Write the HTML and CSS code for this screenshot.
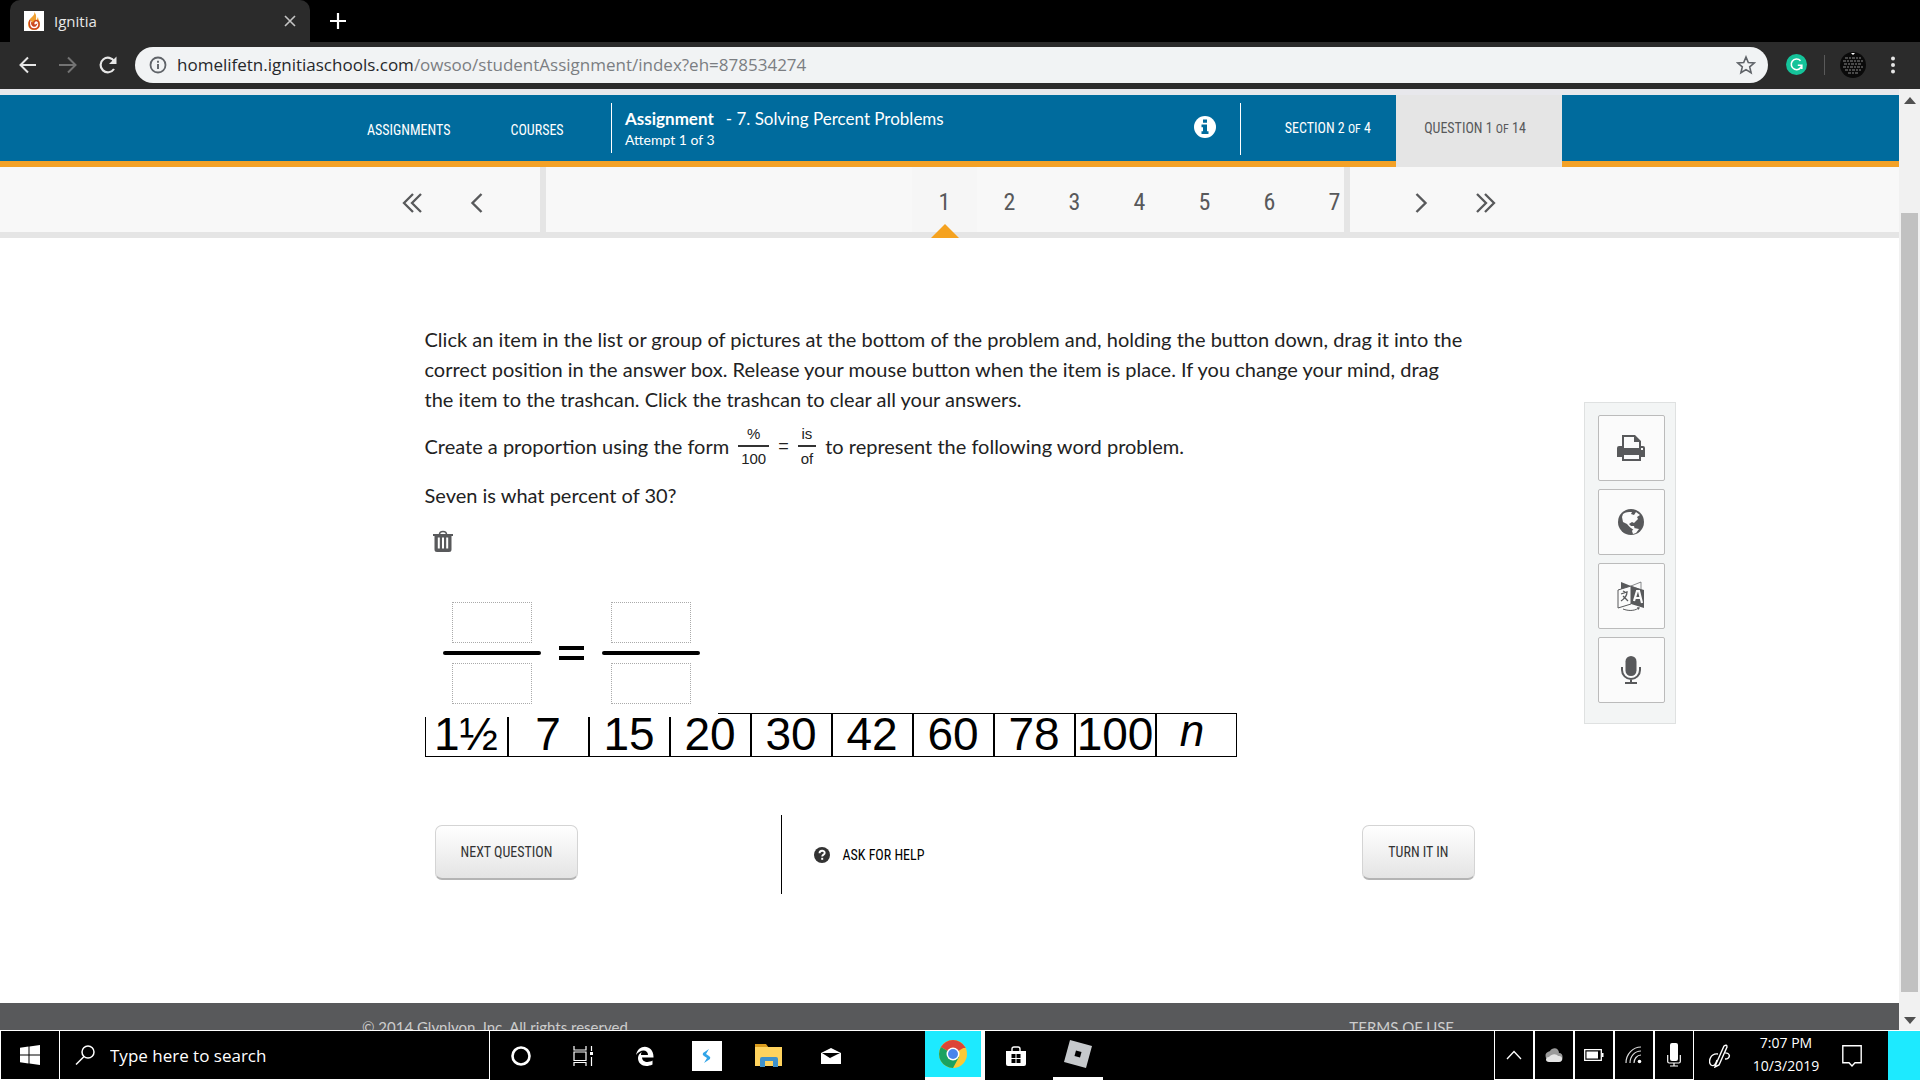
FILE: index.html
```html
<!DOCTYPE html>
<html lang="en">
<head>
  <meta charset="UTF-8">
  <meta name="viewport" content="width=device-width, initial-scale=1.0">
  <title>Ignitia</title>
  <link rel="stylesheet" href="styles.css">
</head>
<body>
  <!-- Browser -->
  <div class="tab-strip">
    <div class="tab">
      <svg class="favicon" viewBox="0 0 20 20"><rect width="20" height="20" fill="#fff"/><path d="M10 1c2 4-6 6-6 12 0 4 3 6 6 6s6-2 6-6c0-3-2-4-2-7-1 2-1 3-2 4 0-4 1-6-2-9z" fill="#f0a030"/><path d="M6 9c-2 5 0 9 4 9 3 0 5-2 5-5s-3-5-5-2c-1 2 0 4 2 3-1 2-5 1-4-3" fill="#fff" stroke="#c8441f" stroke-width="1.500"/></svg>
      <span class="tab-title">Ignitia</span>
      <button type="button" class="tab-close" aria-label="Close tab"><svg width="12" height="12" viewBox="0 0 12 12"><path d="M1 1l10 10M11 1L1 11" stroke="#c4c4c4" stroke-width="1.6"/></svg></button>
    </div>
    <button type="button" class="new-tab" aria-label="New tab"><svg width="16" height="16" viewBox="0 0 16 16"><path d="M8 0v16M0 8h16" stroke="#fff" stroke-width="2.2"/></svg></button>
  </div>
  <div class="toolbar">
    <div class="toolbar-nav">
      <button type="button" aria-label="Back"><svg width="20" height="20" viewBox="0 0 20 20"><path d="M18 10H3M10 2.500L2.500 10l7.500 7.500" fill="none" stroke="#e6e6e6" stroke-width="2"/></svg></button>
      <button type="button" aria-label="Forward"><svg width="20" height="20" viewBox="0 0 20 20"><path d="M1 10h16M10 2.500l7.500 7.500-7.500 7.500" fill="none" stroke="#737373" stroke-width="2"/></svg></button>
      <button type="button" aria-label="Reload"><svg width="20" height="20" viewBox="0 0 20 20"><path d="M16 14a7.300 7.300 0 1 1 .3-7.500" fill="none" stroke="#e6e6e6" stroke-width="2.200"/><path d="M18.500 1.500v7.500H11z" fill="#e6e6e6"/></svg></button>
    </div>
    <div class="address">
      <svg width="18" height="18" viewBox="0 0 18 18"><circle cx="9" cy="9" r="7.500" fill="none" stroke="#5f6368" stroke-width="1.800"/><path d="M9 8v5M9 4.800v1.900" stroke="#5f6368" stroke-width="1.900"/></svg>
      <div class="url">homelifetn.ignitiaschools.com<span>/owsoo/studentAssignment/index?eh=878534274</span></div>
      <svg width="20" height="20" viewBox="0 0 20 20"><path d="M10 2l2.300 5.500 5.900.5-4.500 3.900 1.400 5.800-5.100-3.100-5.100 3.100 1.400-5.800L1.800 8l5.900-.5z" fill="none" stroke="#5f6368" stroke-width="1.600"/></svg>
    </div>
    <svg class="grammarly" width="21" height="21" viewBox="0 0 21 21"><circle cx="10.500" cy="10.500" r="10.500" fill="#15c39a"/><path d="M14.500 6.800a5.300 5.300 0 1 0 1.300 4.400h-4M15.800 11v4" fill="none" stroke="#fff" stroke-width="1.600"/></svg>
    <span class="toolbar-line"></span>
    <svg width="26" height="26" viewBox="0 0 26 26"><circle cx="13" cy="13" r="13" fill="#0a0a0a"/><path d="M5 6h16M3 9h20M4 12h18M3 15h20M5 18h16M8 21h10" stroke="#888" stroke-width="1" stroke-dasharray="3 1 2 1"/><path d="M11 1h4l-2 2z" fill="#fff"/></svg>
    <svg class="dots" width="6" height="18" viewBox="0 0 6 18"><circle cx="3" cy="2.500" r="2" fill="#e6e6e6"/><circle cx="3" cy="9" r="2" fill="#e6e6e6"/><circle cx="3" cy="15.500" r="2" fill="#e6e6e6"/></svg>
  </div>

  <div class="window">
    <div class="page">
      <header class="header">
        <div class="container header-row">
          <nav class="main-nav">
            <a href="#">ASSIGNMENTS</a>
            <a href="#">COURSES</a>
          </nav>
          <div class="assignment">
            <div class="assignment-title"><strong>Assignment</strong>- 7. Solving Percent Problems</div>
            <div class="attempt">Attempt 1 of 3</div>
          </div>
          <button type="button" class="info" aria-label="Assignment info"><svg width="22" height="22" viewBox="0 0 22 22"><circle cx="11" cy="11" r="11" fill="#fff"/><path d="M9 3.500h4v3.200H9zM7.500 8.500H13v6.800h1.500V18h-7v-2.700H9v-4.100H7.500z" fill="#006b9d"/></svg></button>
          <div class="section">SECTION 2 <small>OF</small> 4</div>
          <div class="question-count">QUESTION 1 <small>OF</small> 14</div>
        </div>
      </header>

      <nav class="pager">
        <div class="container pager-row">
          <div class="pager-prev">
            <button type="button" aria-label="First question"><svg width="20" height="20" viewBox="0 0 20 20"><path d="M11 1l-9 9 9 9M19 1l-9 9 9 9" fill="none" stroke="#58595b" stroke-width="2.300"/></svg></button>
            <button type="button" aria-label="Previous question"><svg width="20" height="20" viewBox="0 0 20 20"><path d="M14.500 1L5.500 10l9 9" fill="none" stroke="#58595b" stroke-width="2.400"/></svg></button>
          </div>
          <ol class="pager-list">
            <li class="active"><a href="#">1</a></li>
            <li><a href="#">2</a></li>
            <li><a href="#">3</a></li>
            <li><a href="#">4</a></li>
            <li><a href="#">5</a></li>
            <li><a href="#">6</a></li>
            <li><a href="#">7</a></li>
          </ol>
          <div class="pager-next">
            <button type="button" aria-label="Next question"><svg width="20" height="20" viewBox="0 0 20 20"><path d="M5.500 1l9 9-9 9" fill="none" stroke="#58595b" stroke-width="2.400"/></svg></button>
            <button type="button" aria-label="Last question"><svg width="20" height="20" viewBox="0 0 20 20"><path d="M1 1l9 9-9 9M9 1l9 9-9 9" fill="none" stroke="#58595b" stroke-width="2.300"/></svg></button>
          </div>
        </div>
      </nav>

      <main class="main">
        <div class="content">
          <p class="instructions">Click an item in the list or group of pictures at the bottom of the problem and, holding the button down, drag it into the correct position in the answer box. Release your mouse button when the item is place. If you change your mind, drag the item to the trashcan. Click the trashcan to clear all your answers.</p>
          <p class="proportion">Create a proportion using the form
            <span class="fraction"><span>%</span><span>100</span></span>
            <span class="equals">=</span>
            <span class="fraction"><span>is</span><span>of</span></span>
            to represent the following word problem.</p>
          <p>Seven is what percent of 30?</p>
          <button type="button" class="trash" aria-label="Clear all answers"><svg width="20" height="22" viewBox="0 0 20 22"><path d="M6.500 4.500c0-4 7-4 7 0" fill="none" stroke="#58595b" stroke-width="1.600"/><path fill-rule="evenodd" d="M0 4h20v2h-1.500v13.500q0 2.500-2.500 2.500H4q-2.500 0-2.500-2.500V6H0zM4.800 7.500v11h2v-11zM9 7.500v11h2v-11zM13.200 7.500v11h2v-11z" fill="#58595b"/></svg></button>

          <div class="answer">
            <div class="answer-side">
              <div class="drop"></div>
              <div class="bar"></div>
              <div class="drop"></div>
            </div>
            <div class="answer-equals"></div>
            <div class="answer-side">
              <div class="drop"></div>
              <div class="bar"></div>
              <div class="drop"></div>
            </div>
          </div>
          <ul class="tiles">
            <li>1½</li>
            <li>7</li>
            <li>15</li>
            <li>20</li>
            <li>30</li>
            <li>42</li>
            <li>60</li>
            <li>78</li>
            <li>100</li>
            <li class="variable">n</li>
          </ul>

          <div class="actions">
            <button type="button" class="btn">NEXT QUESTION</button>
            <a href="#" class="help"><svg width="16" height="16" viewBox="0 0 16 16"><circle cx="8" cy="8" r="8" fill="#333"/><path d="M5.500 6.200c0-3.300 5.200-3.200 5.200-.3 0 1.800-2.500 1.600-2.500 3.600" fill="none" stroke="#fff" stroke-width="1.900"/><path d="M7.200 10.800h2v2h-2z" fill="#fff"/></svg>ASK FOR HELP</a>
            <button type="button" class="btn">TURN IT IN</button>
          </div>
        </div>

        <aside class="tools">
          <button type="button" aria-label="Print"><svg width="28" height="26" viewBox="0 0 28 26"><path fill-rule="evenodd" d="M5 0h13l6 6v5h2q2 0 2 2v9h-4v4H5v-4H0v-9q0-2 2-2h3zM7 2v11h15V7h-5V2zM7 20v4h15v-4zM24 13v2h2v-2z" fill="#58595b"/></svg></button>
          <button type="button" aria-label="Web"><svg width="26" height="26" viewBox="0 0 26 26"><circle cx="13" cy="13" r="13" fill="#58595b"/><path d="M5 5c3-2 5-2 9-2l-1 2 3 1 2-3 4 3-3 2 1 2-4 4-2-1-3 2 2 2 3 0 1 4c-4-1-6-4-8-6L5 13 4 8zM16 19l5 1-3 4-3 1-1-3z" fill="#fbfbfb"/></svg></button>
          <button type="button" aria-label="Translate"><svg width="28" height="30" viewBox="0 0 28 30"><path d="M4 1l10 4v2L4 9z" fill="#58595b"/><path d="M14 5l10-4v8z" fill="#fbfbfb" stroke="#58595b" stroke-width=".7"/><path d="M1 9l13-4v18L1 27z" fill="#fbfbfb" stroke="#58595b"/><path d="M14 5l13 4v18l-13-4z" fill="#58595b"/><path d="M4 13l6-2c0 4-3 7-6 9M6 10l2 1M6 15l5 5" fill="none" stroke="#58595b" stroke-width="1.300"/><path d="M17 20l3-10 2 0 3 12M18 17h6" fill="none" stroke="#fbfbfb" stroke-width="2.200"/><path d="M6 28c5 2 11 2 15-.5" fill="none" stroke="#58595b"/><path d="M20 26l3 .5-1.500 2.500z" fill="#58595b"/></svg></button>
          <button type="button" aria-label="Record"><svg width="20" height="28" viewBox="0 0 20 28"><rect x="4.500" width="11" height="20" rx="5.500" fill="#58595b"/><path d="M1 11v3a9 9 0 0 0 18 0v-3M10 23v4M4 27h12" fill="none" stroke="#58595b" stroke-width="2"/></svg></button>
        </aside>
      </main>

      <footer class="footer">
        <div class="container footer-row">
          <span>© 2014 Glynlyon, Inc. All rights reserved.</span>
          <a href="#">TERMS OF USE</a>
        </div>
      </footer>
    </div>
    <div class="scrollbar">
      <svg width="12" height="7" viewBox="0 0 12 7"><path d="M6 0l6 7H0z" fill="#505050"/></svg>
      <div class="thumb"></div>
      <svg width="12" height="7" viewBox="0 0 12 7"><path d="M6 7L0 0h12z" fill="#505050"/></svg>
    </div>
  </div>

  <!-- Taskbar -->
  <div class="taskbar">
    <button type="button" class="start" aria-label="Start"><svg width="20" height="20" viewBox="0 0 20 20"><path d="M0 2.800L8.500 1.600v7.900H0zM9.500 1.400L20 0v9.500H9.500zM0 10.500h8.500v7.900L0 17.200zM9.500 10.500H20V20L9.500 18.600z" fill="#fff"/></svg></button>
    <label class="search">
      <svg width="20" height="20" viewBox="0 0 20 20"><circle cx="13" cy="7" r="6" fill="none" stroke="#fff" stroke-width="1.500"/><path d="M9 11.500L1 19.500" stroke="#fff" stroke-width="1.500"/></svg>
      <input type="text" placeholder="Type here to search" aria-label="Search">
    </label>
    <div class="apps">
      <button type="button" aria-label="Cortana"><svg width="20" height="20" viewBox="0 0 20 20"><circle cx="10" cy="10" r="8.500" fill="none" stroke="#fff" stroke-width="2.600"/></svg></button>
      <button type="button" aria-label="Task view"><svg width="20" height="20" viewBox="0 0 20 20"><path d="M1 0v4h12V0M1 6h12v8.500H1zM1 20v-3.500h12V20M18.500 0v5M18.500 11v9" fill="none" stroke="#fff" stroke-width="1.200"/><path d="M17 6h3v3h-3z" fill="#fff"/></svg></button>
      <button type="button" aria-label="Edge"><svg width="18" height="20" viewBox="0 0 18 20"><path d="M0 9C2-3 18-2 17.500 11.500H6c.3 5 6.500 5.500 10.500 3v4C9 22 2 19 2 12c0-3 2-5 4-6-1 1-1 2-1 3h7C12 3 4 3 0 9z" fill="#fff"/></svg></button>
      <button type="button" aria-label="Swift"><svg width="30" height="30" viewBox="0 0 30 30"><path d="M0 0h30v30H0z" fill="#fff"/><path d="M17 8l-6 4q-1 2 1 3l3 2-3 5 6-4q1-2-1-3l-3-2z" fill="#30a4e8"/></svg></button>
      <button type="button" aria-label="File Explorer"><svg width="28" height="28" viewBox="0 0 28 28"><path d="M0 2h11l3 4H0z" fill="#d99b1d"/><path d="M0 5h27v19H0z" fill="#ffd35e"/><path d="M5 25v-8q0-2 2-2h14q2 0 2 2v8h-5v-6h-8v6z" fill="#3f91cb"/></svg></button>
      <button type="button" aria-label="Mail"><svg width="20" height="16" viewBox="0 0 20 16"><path d="M0 5l10-5 10 5v11H0z" fill="#fff"/><path d="M1 5h18L9 10l3 2z" fill="#000"/></svg></button>
      <span class="gap"></span>
      <button type="button" class="running current" aria-label="Chrome"><svg width="28" height="28" viewBox="0 0 28 28"><circle cx="14" cy="14" r="14" fill="#fcc934"/><path d="M14 14L1.900 7A14 14 0 0 1 26.100 7z" fill="#dc4437"/><path d="M14 14L1.900 7A14 14 0 0 0 14 28l6-11z" fill="#1aa260"/><path d="M14 8h12.600L26.100 7h-12z" fill="#dc4437"/><circle cx="14" cy="14" r="6.500" fill="#fff"/><circle cx="14" cy="14" r="5" fill="#4a85ec"/></svg></button>
      <button type="button" aria-label="Store"><svg width="20" height="20" viewBox="0 0 20 20"><path d="M6 6V3q0-2 2-2h4q2 0 2 2v3" fill="none" stroke="#fff" stroke-width="1.400"/><path d="M0 5h20v13q0 2-2 2H2q-2 0-2-2z" fill="#fff"/><path d="M5.500 8h4v4h-4zM10.500 8h4v4h-4zM5.500 13h4v4h-4zM10.500 13h4v4h-4z" fill="#000"/></svg></button>
      <button type="button" class="running" aria-label="Roblox"><svg width="28" height="28" viewBox="0 0 28 28"><path d="M6 0l22 6-6 22L0 22z" fill="#c6c9cc"/><path d="M12 10.500l5.500 1.500-1.500 5.500-5.500-1.500z" fill="#000"/></svg></button>
    </div>
    <div class="tray">
      <button type="button" aria-label="Show hidden icons"><svg width="16" height="10" viewBox="0 0 16 10"><path d="M1 9l7-7.500L15 9" fill="none" stroke="#fff" stroke-width="1.300"/></svg></button>
      <button type="button" aria-label="OneDrive"><svg width="18" height="14" viewBox="0 0 18 14"><path d="M1 10C-1 4 4 4 5 3c2-4 9-4 9 2 4 0 4 5 3 6z" fill="#9a9a9a"/><path d="M4 14c-4 0-4-5 0-5 3-4 8-3 9-1 5-1 6 6 1 6z" fill="#e4e4e4"/></svg></button>
      <button type="button" aria-label="Battery"><svg width="20" height="12" viewBox="0 0 20 12"><path d="M.7.700h16.600v10.600H.7z" fill="none" stroke="#fff" stroke-width="1.300"/><path d="M2.500 2.500h11.500v7H2.500zM18 4h1.500v4H18z" fill="#fff"/></svg></button>
      <button type="button" aria-label="Network"><svg width="18" height="18" viewBox="0 0 18 18"><path d="M1 17C1 8 8 1 16 1M5 17c0-7 5-12 11-12M9 17c0-4 3-8 7-8" fill="none" stroke="#ddd" stroke-width="1.200"/><circle cx="14.500" cy="15.500" r="1.800" fill="#fff"/></svg></button>
      <button type="button" aria-label="Microphone"><svg width="14" height="24" viewBox="0 0 14 24"><rect x="3" width="8" height="18" rx="2" fill="#fff"/><path d="M.7 12v6.500q0 1.500 1.500 1.500h9.600q1.500 0 1.500-1.500V12M7 20v3M3 23h8" fill="none" stroke="#fff" stroke-width="1.200"/></svg></button>
      <button type="button" class="pen" aria-label="Ink workspace"><svg width="22" height="24" viewBox="0 0 22 24"><path d="M7 20L15 2q3-2 3 1l-8 18-4 2zM9 10c-8-1-10 8-7 11 3 2 5-1 6-5M15 9c7-1 7 6 1 6" fill="none" stroke="#fff" stroke-width="1.400"/></svg></button>
      <div class="clock"><span>7:07 PM</span><span>10/3/2019</span></div>
      <button type="button" class="notify" aria-label="Notifications"><svg width="20" height="22" viewBox="0 0 20 22"><path d="M.8.800h18.400v17H13L10 21l-3-3.200H.8z" fill="none" stroke="#fff" stroke-width="1.400"/></svg></button>
      <span class="peek"></span>
    </div>
  </div>
</body>
</html>
```

FILE: styles.css
```css
* {
  box-sizing: border-box;
}
body {
  display: flex;
  flex-direction: column;
  height: 100vh;
  margin: 0;
  overflow: hidden;
  background: #fff;
  color: #222;
  font-family: Lato, "Open Sans", sans-serif;
  font-size: 20px;
}
button {
  display: flex;
  align-items: center;
  justify-content: center;
  padding: 0;
  border: none;
  background: none;
  cursor: pointer;
}
a {
  color: inherit;
  text-decoration: none;
}
svg {
  display: block;
  flex: none;
}

/* browser */
.tab-strip {
  display: flex;
  align-items: center;
  flex: none;
  height: 42px;
  padding-left: 10px;
  background: #000;
}
.tab {
  display: flex;
  align-items: center;
  width: 300px;
  height: 42px;
  padding: 0 14px;
  border-radius: 10px 10px 0 0;
  background: #2b2b2b;
  color: #e8e8e8;
  font: 15px "Open Sans", sans-serif;
}
.favicon {
  width: 20px;
  height: 20px;
  margin-right: 10px;
}
.tab-title {
  flex: 1;
}
.new-tab {
  margin-left: 20px;
}
.toolbar {
  display: flex;
  align-items: center;
  flex: none;
  height: 47px;
  padding: 0 24px 2px 18px;
  background: #2b2b2b;
}
.toolbar-nav {
  display: flex;
  gap: 20px;
  margin-right: 17px;
}
.address {
  display: flex;
  align-items: center;
  flex: 1;
  height: 36px;
  padding: 0 12px 0 14px;
  border-radius: 18px;
  background: #f1f3f4;
}
.url {
  flex: 1;
  margin-left: 10px;
  color: #26282b;
  font: 17px "Open Sans", sans-serif;
}
.url span {
  color: #7b7e82;
}
.grammarly {
  margin-left: 18px;
}
.toolbar-line {
  width: 1px;
  height: 20px;
  margin: 0 15px 0 17px;
  background: #5a5a5a;
}
.dots {
  margin-left: 24px;
}

/* page */
.window {
  display: flex;
  flex: 1;
  min-height: 0;
}
.page {
  flex: 1;
  overflow: hidden;
  border-top: 6px solid #e8e8ec;
}
.container {
  display: flex;
  max-width: 1225px;
  margin: 0 auto;
}
.header {
  background: linear-gradient(#006b9d 66px, #f3a126 66px);
  color: #fff;
}
.header-row {
  height: 72px;
}
.main-nav {
  display: flex;
  gap: 60px;
  width: 274px;
  padding: 26px 0 0 30px;
}
.main-nav,
.section,
.question-count,
.btn,
.help {
  font-family: "Liberation Sans Narrow", "Roboto Condensed", "Liberation Sans", sans-serif;
  font-size: 14px;
  line-height: 18px;
}
.assignment {
  flex: 1;
  height: 50px;
  margin-top: 8px;
  padding: 5px 0 0 13px;
  border-left: 1px solid #fff;
}
.assignment-title {
  font-size: 17px;
  line-height: 22px;
}
.assignment-title strong {
  margin-right: 12px;
}
.attempt {
  font-size: 14px;
  line-height: 20px;
}
.info {
  height: 64px;
  margin-right: 24px;
}
.section {
  height: 52px;
  margin-top: 8px;
  padding: 16px 25px 0 44px;
  border-left: 1px solid #fff;
}
.section small,
.question-count small {
  font-size: 12px;
}
.question-count {
  width: 166px;
  height: 72px;
  padding: 24px 8px 0 0;
  background: #e5e5e5;
  color: #58595b;
  text-align: center;
}
.pager {
  border-bottom: 6px solid #e5e5e5;
  background: #f8f8f8;
}
.pager-row {
  height: 65px;
}
.pager-prev,
.pager-next {
  display: flex;
  gap: 45px;
  padding-top: 6px;
}
.pager-prev {
  width: 203px;
  padding-left: 65px;
}
.pager-next {
  width: 212px;
  padding-left: 61px;
}
.pager-list {
  display: flex;
  flex: 1;
  height: 71px;
  margin: 0;
  padding: 0 0 0 366px;
  overflow: hidden;
  border: solid #e5e5e5;
  border-width: 0 6px;
  list-style: none;
}
.pager-list li {
  flex: none;
  width: 65px;
  height: 65px;
  color: #58595b;
  font: 24px/70px "Liberation Sans Narrow", "Roboto Condensed", "Liberation Sans", sans-serif;
  text-align: center;
}
.pager-list a {
  display: block;
}
.pager-list .active {
  position: relative;
  background: #f6f6f6;
}
.pager-list .active::after {
  content: "";
  position: absolute;
  bottom: -6px;
  left: 19px;
  border: solid transparent;
  border-width: 0 14px 14px;
  border-bottom-color: #f5a21f;
}

/* question */
.main {
  display: grid;
  grid-template-columns: 1fr minmax(0, 1050px) 1fr;
  padding-bottom: 109px;
}
.content {
  grid-column: 2;
  padding-top: 86px;
}
.content p {
  margin: 0 0 16px;
  line-height: 30px;
}
.content .instructions {
  max-width: 1040px;
  margin-bottom: 10px;
}
.content .proportion {
  display: flex;
  align-items: center;
  gap: 9px;
  height: 44px;
  margin: 10px 0 12px;
}
.fraction {
  display: flex;
  flex-direction: column;
  font: 15px/23px "Liberation Sans", sans-serif;
  text-align: center;
}
.fraction span {
  padding: 0 3px;
}
.fraction span:first-child {
  border-bottom: 2px solid #333;
}
.equals {
  font: 18px "Liberation Sans", sans-serif;
}
.trash {
  margin: 20px 0 0 8px;
}
.answer {
  position: relative;
  z-index: 1;
  display: flex;
  align-items: center;
  gap: 18px;
  width: 293px;
  height: 124px;
  margin: 41px 0 -4px;
  padding: 0 0 5px 18px;
  background: #fff;
}
.answer-side {
  display: flex;
  flex-direction: column;
  align-items: center;
  gap: 8px;
}
.drop {
  width: 80px;
  height: 41px;
  border: 1px dotted #aaa;
}
.bar {
  width: 98px;
  height: 4px;
  border-radius: 2px;
  background: #000;
}
.answer-equals {
  width: 25px;
  height: 14px;
  border: solid #000;
  border-width: 4px 0;
}
.tiles {
  display: grid;
  grid-template-columns: repeat(10, minmax(0, 1fr));
  width: 812px;
  height: 44px;
  margin: 0;
  padding: 0;
  border: 1px solid #000;
  color: #000;
  font: 46px/41px "Liberation Sans", sans-serif;
  list-style: none;
}
.tiles li {
  text-align: center;
  white-space: nowrap;
}
.tiles li + li {
  border-left: 2px solid #000;
}
.tiles .variable {
  padding-right: 8px;
  font-size: 44px;
  font-style: italic;
  line-height: 34px;
}
.actions {
  display: flex;
  align-items: center;
  height: 79px;
  margin-top: 58px;
  padding-left: 10px;
}
.btn {
  height: 55px;
  margin-bottom: 5px;
  padding: 0 25px;
  border: 1px solid #d4d4d4;
  border-bottom: 2px solid #b4b4b4;
  border-radius: 7px;
  background: linear-gradient(#fff, #e4e4e4);
  color: #333;
}
.help {
  display: flex;
  align-items: center;
  flex: 1;
  gap: 12px;
  height: 79px;
  margin-left: 203px;
  padding-left: 32px;
  border-left: 1px solid #000;
  color: #000;
}
.tools {
  display: flex;
  flex-direction: column;
  gap: 8px;
  width: 92px;
  height: 322px;
  margin: 164px 0 0 109px;
  padding: 12px 10px 0 13px;
  border: 1px solid #dfe1e1;
  background: #f3f5f5;
}
.tools button {
  height: 66px;
  border: 1px solid #bbb;
  border-radius: 2px;
  background: #fbfbfb;
}
.footer {
  height: 90px;
  padding-top: 14px;
  background: #58595b;
  color: #ccc;
  font-size: 15px;
  line-height: 20px;
}
.footer-row {
  justify-content: space-between;
  padding: 0 108px 0 25px;
}
.scrollbar {
  display: flex;
  flex-direction: column;
  align-items: center;
  justify-content: space-between;
  width: 21px;
  padding: 8px 0 6px;
  background: #f1f1f1;
}
.thumb {
  flex: 1;
  width: 17px;
  margin: 109px 0 25px;
  background: #c1c1c1;
}

/* taskbar */
.taskbar {
  display: flex;
  flex: none;
  height: 50px;
  border-top: 1px solid #fff;
  background: #000;
  color: #fff;
  font-family: "Open Sans", sans-serif;
}
.start {
  width: 60px;
  border: solid #fff;
  border-width: 0 1px 1px;
}
.search {
  display: flex;
  align-items: center;
  gap: 15px;
  width: 430px;
  padding-left: 15px;
  border: solid #fff;
  border-width: 0 1px 1px 0;
}
.search input {
  flex: 1;
  min-width: 0;
  padding: 0;
  border: none;
  outline: none;
  background: none;
  color: #fff;
  font: 17px "Open Sans", sans-serif;
}
.search input::placeholder {
  color: #fff;
  opacity: 1;
}
.apps {
  display: flex;
  flex: 1;
}
.apps button {
  width: 62px;
}
.apps .gap {
  width: 63px;
}
.apps .running {
  width: 50px;
  margin: 0 6px;
  border-bottom: 3px solid #fff;
}
.apps .current {
  width: 60px;
  margin: 0;
  border-right: 4px solid #fff;
  background: #1deaff;
}
.tray {
  display: flex;
}
.tray button {
  width: 40px;
  border: solid #fff;
  border-width: 0 1px 1px;
}
.tray .pen,
.tray .notify {
  width: 52px;
  border: none;
}
.clock {
  display: flex;
  flex-direction: column;
  width: 80px;
  font-size: 14px;
  line-height: 23px;
  text-align: center;
}
.peek {
  width: 32px;
  margin-left: 10px;
  background: #1deaff;
}
```
